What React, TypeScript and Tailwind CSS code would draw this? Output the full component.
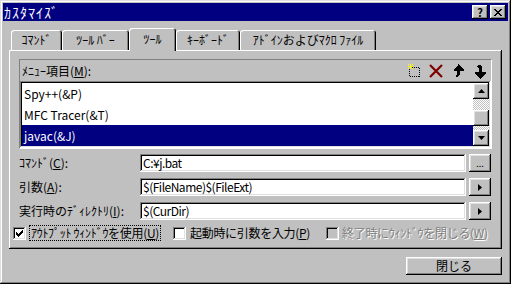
import React from 'react';

const raised =
  'shadow-[inset_-1px_-1px_#000,inset_1px_1px_#fff,inset_-2px_-2px_#808080,inset_2px_2px_#dfdfdf]';
const sunken =
  'shadow-[inset_-1px_-1px_#fff,inset_1px_1px_#808080,inset_-2px_-2px_#dfdfdf,inset_2px_2px_#000]';

const tabs = [
  { label: 'ｺﾏﾝﾄﾞ', w: 'w-[51px]' },
  { label: 'ﾂｰﾙ ﾊﾞｰ', w: 'w-[67px]' },
  { label: 'ﾂｰﾙ', w: 'w-[47px]', active: true },
  { label: 'ｷｰﾎﾞｰﾄﾞ', w: 'w-[64px]' },
  { label: 'ｱﾄﾞｲﾝおよびﾏｸﾛ ﾌｧｲﾙ', w: 'w-[136px]' },
];

const items = ['Spy++(&P)', 'MFC Tracer(&T)', 'javac(&J)'];

function Triangle({ dir }: { dir: 'up' | 'down' | 'right' }) {
  if (dir === 'right')
    return (
      <svg width="4" height="7" viewBox="0 0 4 7">
        <polygon points="0,0 4,3.5 0,7" fill="#000" />
      </svg>
    );
  return (
    <svg width="7" height="4" viewBox="0 0 7 4">
      <polygon points={dir === 'up' ? '3.5,0 7,4 0,4' : '0,0 7,0 3.5,4'} fill="#000" />
    </svg>
  );
}

function Check() {
  return (
    <svg width="7" height="7" viewBox="0 0 7 7" shapeRendering="crispEdges">
      <path d="M0 2h1v1h1v1h1V3h1V2h1V1h1V0h1v3H6v1H5v1H4v1H3v1H2V6H1V5H0z" fill="#000" />
    </svg>
  );
}

function ToolIcons() {
  return (
    <div className="ml-auto flex gap-[6px]">
      <svg width="16" height="16" viewBox="0 0 16 16" shapeRendering="crispEdges">
        <rect x="3.5" y="4.5" width="10" height="9" fill="none" stroke="#000" strokeDasharray="1 1" />
        <path d="M4 1h1v5H4zM2 3h5v1H2zM2 1h1v1H2zM6 1h1v1H6zM2 5h1v1H2zM6 5h1v1H6z" fill="#ffff00" />
      </svg>
      <svg width="16" height="16" viewBox="0 0 16 16">
        <path d="M2 2L14 14M14 2L2 14" stroke="#800000" strokeWidth="2.2" />
      </svg>
      <svg width="16" height="16" viewBox="0 0 16 16" shapeRendering="crispEdges">
        <path d="M8 1h1v1h1v1h1v1h1v1h1v1h1v2h-4v4h-1v1h-1v1H6v-2h1V8H4V6h1V5h1V4h1V3h1z" fill="#000" />
      </svg>
      <svg width="16" height="16" viewBox="0 0 16 16" shapeRendering="crispEdges">
        <path d="M6 2h3v1h1v6h4v2h-1v1h-1v1h-1v1h-1v1H9v1H8v-1H7v-1H6v-1H5v-1H4v-1H3V9h4V5H6V4H5V3h1z" fill="#000" />
      </svg>
    </div>
  );
}

function Field({ label, value, btn }: { label: React.ReactNode; value: string; btn: 'dots' | 'arrow' }) {
  return (
    <div className="flex h-[18px] items-center">
      <div className="w-[121px] leading-none">{label}</div>
      <div className={`flex h-[18px] w-[326px] items-center bg-white pl-[3px] leading-none tracking-[-0.5px] ${sunken}`}>
        {value}
      </div>
      <button className={`ml-[3px] flex h-[18px] w-[22px] items-center justify-center bg-[#c0c0c0] ${raised}`}>
        {btn === 'dots' ? <span className="text-[9px] leading-none">...</span> : <Triangle dir="right" />}
      </button>
    </div>
  );
}

export default function App() {
  return (
    <div className="flex h-[284px] w-[511px] flex-col whitespace-nowrap bg-[#c0c0c0] p-[3px] font-['Noto_Sans_CJK_JP',sans-serif] text-[12px] text-black shadow-[inset_-1px_-1px_#000,inset_1px_1px_#dfdfdf,inset_-2px_-2px_#808080,inset_2px_2px_#fff]">
      <div className="flex h-[18px] shrink-0 items-center bg-[#000080] pl-[1px] pr-[2px]">
        <span className="text-[14px] leading-none tracking-[1px] text-white">ｶｽﾀﾏｲｽﾞ</span>
        <div className="ml-auto flex gap-[2px]">
          <button className={`flex h-[14px] w-[16px] items-center justify-center bg-[#c0c0c0] text-[11px] font-bold leading-none ${raised}`}>
            ?
          </button>
          <button className={`flex h-[14px] w-[16px] items-center justify-center bg-[#c0c0c0] ${raised}`}>
            <svg width="8" height="7" viewBox="0 0 8 7" shapeRendering="crispEdges">
              <path d="M0 0h2v1h1v1h2V1h1V0h2v1H7v1H6v1H5v1h1v1h1v1h1v1H6V6H5V5H3v1H2v1H0V6h1V5h1V4h1V3H2V2H1V1H0z" fill="#000" />
            </svg>
          </button>
        </div>
      </div>

      <div className="flex flex-col px-[6px]">
        <div className="flex h-[29px] items-end pl-[2px]">
          {tabs.map((t) =>
            t.active ? (
              <div
                key={t.label}
                className={`relative z-10 -mb-[1px] flex h-[23px] items-center justify-center rounded-t-[3px] bg-[#c0c0c0] pb-[2px] leading-none shadow-[inset_1px_1px_#fff,inset_-1px_0_#000,inset_-2px_0_#808080] ${t.w}`}
              >
                {t.label}
              </div>
            ) : (
              <div
                key={t.label}
                className={`flex h-[20px] items-center justify-center rounded-t-[3px] leading-none shadow-[inset_1px_1px_#fff,inset_-1px_0_#000,inset_-2px_0_#808080] ${t.w}`}
              >
                {t.label}
              </div>
            ),
          )}
        </div>

        <div className="flex h-[199px] flex-col bg-[#c0c0c0] px-[10px] pt-[9px] shadow-[inset_-1px_-1px_#000,inset_1px_1px_#fff,inset_-2px_-2px_#808080]">
          <div className="flex flex-col border border-b-white border-l-[#808080] border-r-white border-t-[#808080]">
            <div className="flex h-[21px] items-center pl-[2px] pr-[3px]">
              <span className="leading-none">
                ﾒﾆｭｰ項目(<u>M</u>):
              </span>
              <ToolIcons />
            </div>
            <div className={`flex h-[67px] bg-white p-[2px] ${sunken}`}>
              <div className="flex flex-1 flex-col text-[12px]">
                {items.map((it, i) => (
                  <div
                    key={it}
                    className={`flex h-[21px] items-center pl-[2px] leading-none ${i === 2 ? 'bg-[#000080] text-white' : ''}`}
                  >
                    {it}
                  </div>
                ))}
              </div>
              <div className="flex w-[16px] flex-col">
                <div className={`flex h-[16px] items-center justify-center bg-[#c0c0c0] ${raised}`}>
                  <Triangle dir="up" />
                </div>
                <div className="h-[11px] bg-[repeating-conic-gradient(#fff_0%_25%,#c0c0c0_0%_50%)] bg-[length:2px_2px]" />
                <div className={`h-[16px] bg-[#c0c0c0] ${raised}`} />
                <div className="h-[4px] bg-[repeating-conic-gradient(#fff_0%_25%,#c0c0c0_0%_50%)] bg-[length:2px_2px]" />
                <div className={`flex h-[16px] items-center justify-center bg-[#c0c0c0] ${raised}`}>
                  <Triangle dir="down" />
                </div>
              </div>
            </div>
          </div>

          <div className="mt-[5px] flex flex-col gap-[6px]">
            <Field label={<>ｺﾏﾝﾄﾞ(<u>C</u>):</>} value="C:¥j.bat" btn="dots" />
            <Field label={<>引数(<u>A</u>):</>} value="$(FileName)$(FileExt)" btn="arrow" />
            <Field label={<>実行時のﾃﾞｨﾚｸﾄﾘ(<u>I</u>):</>} value="$(CurDir)" btn="arrow" />
          </div>

          <div className="-ml-[6px] mt-[5px] flex h-[16px] items-center">
            <div className="flex w-[160px] shrink-0 items-center">
              <div className={`flex h-[13px] w-[13px] items-center justify-center bg-white ${sunken}`}>
                <Check />
              </div>
              <span className="ml-[3px] border border-dotted border-black px-[1px] leading-[14px] tracking-[-0.3px]">
                ｱｳﾄﾌﾟｯﾄ ｳｨﾝﾄﾞｳを使用(<u>U</u>)
              </span>
            </div>
            <div className="flex w-[153px] shrink-0 items-center">
              <div className={`h-[13px] w-[13px] bg-white ${sunken}`} />
              <span className="ml-[4px] leading-none tracking-[-0.3px]">
                起動時に引数を入力(<u>P</u>)
              </span>
            </div>
            <div className="flex items-center">
              <div className={`h-[13px] w-[13px] bg-[#c0c0c0] ${sunken}`} />
              <span className="ml-[3px] leading-none tracking-[-0.3px] text-[#808080] [text-shadow:1px_1px_#fff]">
                終了時にｳｨﾝﾄﾞｳを閉じる(<u>W</u>)
              </span>
            </div>
          </div>
        </div>

        <div className="mt-[8px] flex justify-end">
          <button className={`flex h-[18px] w-[96px] items-center justify-center bg-[#c0c0c0] leading-none ${raised}`}>
            閉じる
          </button>
        </div>
      </div>
    </div>
  );
}
